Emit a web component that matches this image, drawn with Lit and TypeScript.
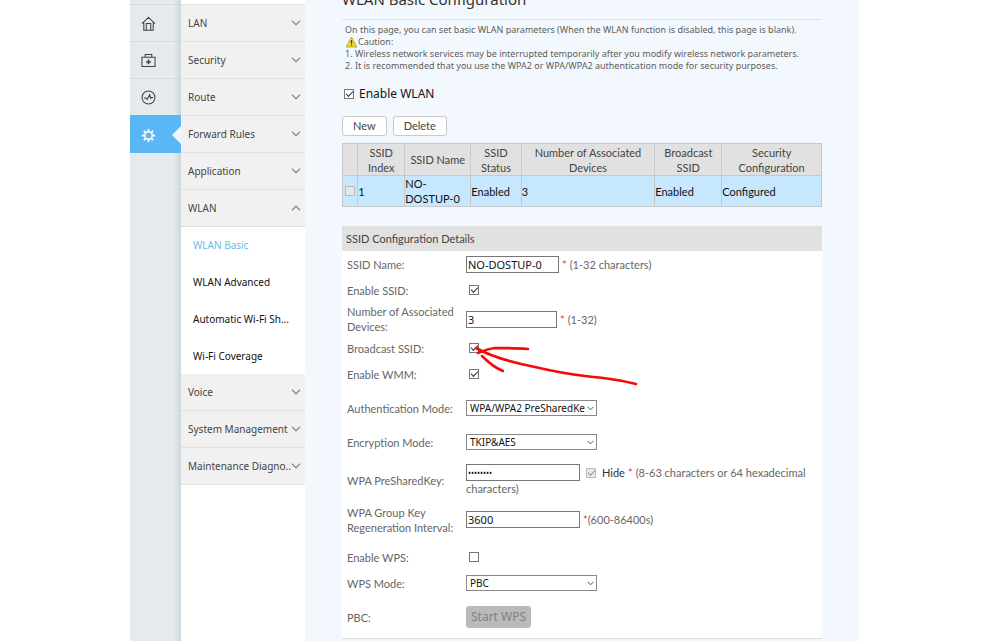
import { LitElement, html, css, svg, nothing } from "lit";
import { customElement } from "lit/decorators.js";

const house = svg`<path d="M1 8.2 8 1.5l7 6.7M3 7v8.3h10V7M5.6 15V8h4.8v7"/>`;
const kit = svg`<path d="M1 4.5h14v10H1zM4.5 4.5v-3h7v3"/><path stroke-width="1.6" d="M8 7v5M5.5 9.5h5"/>`;
const pulse = svg`<circle cx="8" cy="8" r="6.9"/><path d="M3 8.5h2.5l1 1.7L9.3 5l1 4 1-1H13"/>`;
const gear = svg`<circle cx="8" cy="8" r="4"/><path stroke-width="2" d="M8 1v3M8 12v3M1 8h3M12 8h3M3.1 3.1l2 2M10.9 10.9l2 2M3.1 12.9l2-2M10.9 5.1l2-2"/>`;

const rail = [
  { name: "Home", icon: house },
  { name: "Setup", icon: kit },
  { name: "Diagnosis", icon: pulse },
  { name: "Advanced", icon: gear, active: true },
];

const menu: { label: string; items?: string[] }[] = [
  { label: "LAN" },
  { label: "Security" },
  { label: "Route" },
  { label: "Forward Rules" },
  { label: "Application" },
  { label: "WLAN", items: ["WLAN Basic", "WLAN Advanced", "Automatic Wi-Fi Sh...", "Wi-Fi Coverage"] },
  { label: "Voice" },
  { label: "System Management" },
  { label: "Maintenance Diagno.." },
];

@customElement("app-root")
export class AppRoot extends LitElement {
  static styles = css`
    :host {
      display: block;
      height: 100vh;
      overflow: hidden;
      background: #fff;
      font-family: "Noto Sans", "Open Sans", sans-serif;
      color: #333;
    }
    * { box-sizing: border-box; }
    .page {
      display: grid;
      grid-template-columns: 130fr 729fr 141fr;
      height: 100%;
    }
    .shell {
      grid-column: 2;
      display: grid;
      grid-template-columns: 51px 124px 1fr;
      min-width: 0;
    }
    .rail {
      display: flex;
      flex-direction: column;
      padding-top: 4px;
      background: linear-gradient(90deg, #e4eaed 44px, #cfd6da);
    }
    .rail a {
      display: flex;
      align-items: center;
      height: 37px;
      padding: 1px 0 0 11px;
      border-top: 1px solid #d2dade;
      color: #3c4246;
    }
    .rail a.active {
      justify-content: space-between;
      height: 38px;
      border-top-color: #58b7f4;
      background: #58b7f4;
      color: #fff;
    }
    .rail svg { width: 15px; height: 15px; fill: none; stroke: currentColor; stroke-width: 1.1; }
    .rail .active svg { stroke-width: 1.5; }
    .notch {
      border: 9px solid transparent;
      border-right-color: #f1f7fc;
      border-left: 0;
    }
    .nav { padding-top: 4px; font-size: 10px; }
    .group {
      display: flex;
      align-items: center;
      justify-content: space-between;
      width: 100%;
      height: 37px;
      padding: 0 4px 0 7px;
      border: 0;
      border-top: 1px solid #e1e1e1;
      background: #f1f1f1;
      color: #444;
      font: inherit;
      white-space: nowrap;
    }
    .group svg { flex: none; width: 10px; height: 6px; fill: none; stroke: #8a8f94; stroke-width: 1.4; }
    .group.open svg { transform: rotate(180deg); }
    .sub {
      display: grid;
      gap: 1px;
      border-top: 1px solid #e1e1e1;
      background: #fff;
    }
    .sub + .group { height: 36px; border-top: 0; }
    .sub a {
      height: 36px;
      padding-left: 12px;
      line-height: 36px;
      color: #111;
      text-decoration: none;
      white-space: nowrap;
    }
    .sub a.current { color: #6bb9ee; }
    .end { height: 1px; background: #e1e1e1; }

    .main { padding: 0 37px; background: #f3f8fe; min-width: 0; }
    h1 {
      margin: -12px 0 9px;
      font-size: 15px;
      line-height: 22px;
      font-weight: 400;
    }
    .intro {
      padding: 4px 3px 0;
      border-top: 1px solid #dfe4e6;
      font-size: 9px;
      line-height: 12px;
      color: #5e5e5a;
      white-space: nowrap;
    }
    .intro p { margin: 0; }
    .caution { display: flex; align-items: center; }
    .caution svg { width: 13px; height: 12px; }
    .enable {
      display: flex;
      align-items: center;
      gap: 5px;
      margin: 14px 0 14px 2px;
      font-size: 12px;
      line-height: 16px;
      color: #111;
    }
    .actions { display: flex; gap: 6px; margin-bottom: 7px; }
    .actions button {
      height: 20px;
      padding: 0 10px;
      border: 1px solid #c9c9c9;
      border-radius: 3px;
      background: #fff;
      color: #444;
      font: 11px/16px Lato, "Noto Sans", sans-serif;
    }
    input[type="checkbox"] {
      appearance: none;
      display: grid;
      place-items: center;
      flex: none;
      width: 10px;
      height: 10px;
      margin: 0;
      border: 1px solid #777;
      background: #fff;
    }
    input[type="checkbox"]:checked::after {
      content: "";
      width: 6px;
      height: 3px;
      margin-bottom: 2px;
      border: solid #333;
      border-width: 0 0 1px 1px;
      transform: rotate(-45deg);
    }
    input[type="checkbox"]:disabled { border-color: #bbb; background: #e8e8e8; }
    input[type="checkbox"]:disabled::after { border-color: #999; }

    table {
      width: 100%;
      border-collapse: collapse;
      table-layout: fixed;
      font: 11px/15px Lato, "Noto Sans", sans-serif;
    }
    th, td { height: 32px; padding: 0; border: 1px solid #c8c8c8; }
    td { height: 31px; }
    th { background: #e1e1e1; font-weight: 400; color: #444; }
    td { background: #c7e7ff; color: #111; }
    td input[type="checkbox"] { margin: 0 auto; border-color: #bbb; background: #e6e6e6; }

    .details {
      margin-top: 19px;
      border-bottom: 1px solid #dcdfe2;
      background: #fff;
      font: 11px/15px Lato, "Noto Sans", sans-serif;
      color: #666;
    }
    h2 {
      margin: 0;
      padding: 0 4px;
      background: #e1e1e1;
      font-size: 11px;
      line-height: 25px;
      font-weight: 400;
      color: #444;
    }
    .row {
      display: grid;
      grid-template-columns: 119px 1fr;
      align-items: center;
      min-height: 26px;
      padding-left: 5px;
    }
    .row.two { min-height: 32px; }
    .row.mid { min-height: 34px; }
    .row.key { min-height: 42px; }
    .row.interval { min-height: 37px; }
    .security { padding: 4px 0 6px; }
    .field { display: flex; flex-wrap: wrap; align-items: center; column-gap: 3px; }
    .field > input[type="checkbox"] { margin: 0 3px; }
    .hide { color: #333; }
    .star { color: #f0334b; }
    input.text, select {
      height: 17px;
      margin: 0;
      padding: 0 1px;
      border: 1px solid #777;
      border-radius: 0;
      background: #fff;
      color: #111;
      font: 11px/15px "Noto Sans", sans-serif;
    }
    input.text[type="password"] { font-size: 8px; }
    .w90 { width: 91px; }
    .w93 { width: 93px; }
    .w114 { width: 114px; }
    .pick { display: grid; width: 131px; align-items: center; }
    .pick select {
      grid-area: 1 / 1;
      appearance: none;
      height: 16px;
      width: 100%;
      padding: 0 11px 0 3px;
      border-color: #888;
      font-size: 10px;
      line-height: 14px;
    }
    .pick svg {
      grid-area: 1 / 1;
      justify-self: end;
      width: 7px;
      height: 5px;
      margin-right: 3px;
      fill: none;
      stroke: #555;
      pointer-events: none;
    }
    .start {
      height: 22px;
      padding: 0 5px;
      border: 0;
      border-radius: 3px;
      background: #bababa;
      color: #828282;
      font: 12px/20px "Noto Sans", sans-serif;
    }
    .row.pbc { min-height: 42px; }
    .anchor { position: relative; }
    .mark {
      position: absolute;
      left: 0;
      top: -4px;
      width: 180px;
      height: 60px;
      fill: none;
      stroke: #f90808;
      stroke-width: 2.6;
      stroke-linecap: round;
      stroke-linejoin: round;
      pointer-events: none;
    }
  `;

  private menuGroup(g: { label: string; items?: string[] }) {
    return html`
      <button class="group ${g.items ? "open" : ""}" aria-expanded=${g.items ? "true" : "false"}>
        ${g.label}<svg viewBox="0 0 10 6"><path d="M1 .8 5 4.8 9 .8" /></svg>
      </button>
      ${g.items
        ? html`<div class="sub">
            ${g.items.map((t, i) => html`<a href="#" class=${i === 0 ? "current" : ""}>${t}</a>`)}
          </div>`
        : nothing}
    `;
  }

  private row(id: string, label: string, field: unknown, kind = "") {
    return html`<div class="row ${kind}"><label for=${id}>${label}</label>${field}</div>`;
  }

  private check(id: string, on: boolean) {
    return html`<div class="field"><input id=${id} type="checkbox" .checked=${on} /></div>`;
  }

  private pick(id: string, value: string) {
    return html`<div class="pick">
      <select id=${id}><option>${value}</option></select>
      <svg viewBox="0 0 7 5"><path d="M.5 .8 3.5 3.8 6.5 .8" /></svg>
    </div>`;
  }

  render() {
    const star = html`<span class="star">*</span>`;
    return html`
      <div class="page">
        <div class="shell">
          <nav class="rail">
            ${rail.map(
              (r) => html`<a href="#" aria-label=${r.name} class=${r.active ? "active" : ""}>
                <svg viewBox="0 0 16 16">${r.icon}</svg>${r.active ? html`<i class="notch"></i>` : nothing}
              </a>`
            )}
          </nav>
          <nav class="nav">
            ${menu.map((g) => this.menuGroup(g))}
            <div class="end"></div>
          </nav>
          <main class="main">
            <h1>WLAN Basic Configuration</h1>
            <div class="intro">
              <p>On this page, you can set basic WLAN parameters (When the WLAN function is disabled, this page is blank).</p>
              <p class="caution">
                <svg viewBox="0 0 12 12">
                  <path d="M6 1 11.4 11H.6z" fill="#f6dc2e" stroke="#a89a3a" stroke-width=".8" stroke-linejoin="round" />
                  <path d="M6 4.2v3.4M6 8.6v1.2" stroke="#333" stroke-width="1.3" />
                </svg>Caution:
              </p>
              <p>1. Wireless network services may be interrupted temporarily after you modify wireless network parameters.</p>
              <p>2. It is recommended that you use the WPA2 or WPA/WPA2 authentication mode for security purposes.</p>
            </div>
            <label class="enable"><input type="checkbox" .checked=${true} />Enable WLAN</label>
            <div class="actions"><button>New</button><button>Delete</button></div>
            <table>
              <colgroup>
                <col style="width:3.2%" /><col style="width:9.8%" /><col style="width:13.8%" /><col style="width:10.5%" />
                <col style="width:27.9%" /><col style="width:14%" /><col style="width:20.8%" />
              </colgroup>
              <thead>
                <tr>
                  <th></th><th>SSID<br />Index</th><th>SSID Name</th><th>SSID<br />Status</th>
                  <th>Number of Associated<br />Devices</th><th>Broadcast<br />SSID</th><th>Security<br />Configuration</th>
                </tr>
              </thead>
              <tbody>
                <tr>
                  <td><input type="checkbox" aria-label="Select SSID 1" /></td>
                  <td>1</td><td>NO-<br />DOSTUP-0</td><td>Enabled</td><td>3</td><td>Enabled</td><td>Configured</td>
                </tr>
              </tbody>
            </table>
            <section class="details">
              <h2>SSID Configuration Details</h2>
              ${this.row("ssid", "SSID Name:", html`<div class="field">
                <input id="ssid" class="text w93" value="NO-DOSTUP-0" />${star}<span>(1-32 characters)</span>
              </div>`)}
              ${this.row("en", "Enable SSID:", this.check("en", true))}
              ${this.row("num", "Number of Associated Devices:", html`<div class="field">
                <input id="num" class="text w90" value="3" />${star}<span>(1-32)</span>
              </div>`, "two")}
              ${this.row("bc", "Broadcast SSID:", html`<div class="field anchor">
                <input id="bc" type="checkbox" .checked=${true} />
                <svg class="mark" viewBox="0 0 180 60">
                  <path d="M10 9C24 17 44 23 69 28 86 32 102 35 119 37 138 39 155 41 170 45" />
                  <path d="M62 10C50 9 38 9 29 9 20 10 17 12 12 14" />
                  <path d="M16 17C22 23 29 29 37 32" />
                </svg>
              </div>`)}
              ${this.row("wmm", "Enable WMM:", this.check("wmm", true))}
              <div class="security">
                ${this.row("auth", "Authentication Mode:", this.pick("auth", "WPA/WPA2 PreSharedKey"), "mid")}
                ${this.row("enc", "Encryption Mode:", this.pick("enc", "TKIP&AES"), "mid")}
                ${this.row("psk", "WPA PreSharedKey:", html`<div class="field">
                  <input id="psk" class="text w114" type="password" value="password" />
                  <input id="hide" type="checkbox" disabled .checked=${true} />
                  <label for="hide" class="hide">Hide</label>${star}<span>(8-63 characters or 64 hexadecimal</span>
                  <span>characters)</span>
                </div>`, "key")}
                ${this.row("gk", "WPA Group Key Regeneration Interval:", html`<div class="field">
                  <input id="gk" class="text w114" value="3600" /><span>${star}(600-86400s)</span>
                </div>`, "interval")}
              </div>
              ${this.row("wps", "Enable WPS:", this.check("wps", false))}
              ${this.row("mode", "WPS Mode:", this.pick("mode", "PBC"))}
              ${this.row("pbc", "PBC:", html`<div><button id="pbc" class="start" disabled>Start WPS</button></div>`, "pbc")}
            </section>
          </main>
        </div>
      </div>
    `;
  }
}
